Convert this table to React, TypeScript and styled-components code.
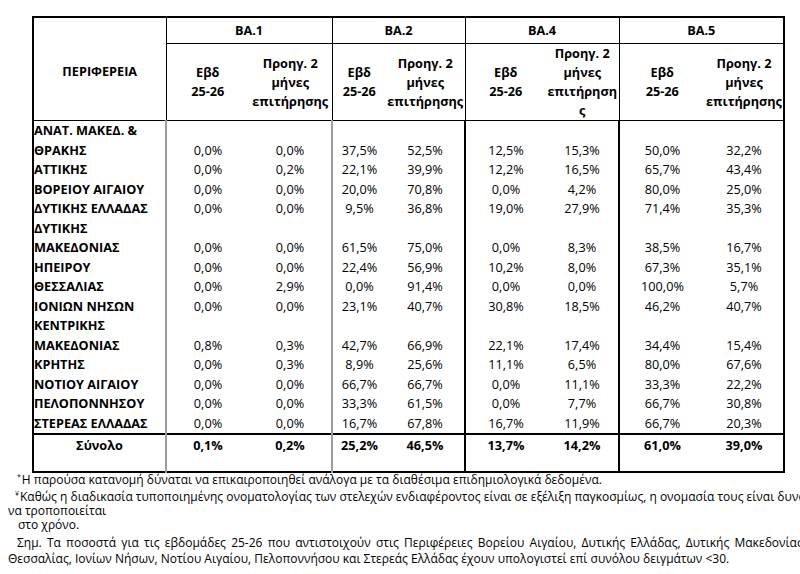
import React from "react";
import styled, { createGlobalStyle } from "styled-components";

const GlobalStyle = createGlobalStyle`
  html, body { margin: 0; padding: 0; background: #fff; }
  body { font-family: "Open Sans", "Noto Sans", sans-serif; color: #000; overflow: hidden; }
`;

const Page = styled.div`
  width: 800px;
  height: 574px;
  overflow: hidden;
  padding-top: 16px;
  box-sizing: border-box;
`;

const Table = styled.table`
  margin-left: 32px;
  width: 751px;
  border-collapse: collapse;
  table-layout: fixed;
  border: 2px solid #000;
  font-size: 12.7px;
  line-height: 19.5px;
`;

const GroupTh = styled.th`
  height: 25px;
  padding: 0;
  font-weight: 700;
  text-align: center;
  vertical-align: middle;
  border-bottom: 1px solid #000;
  border-right: 1px solid #000;
`;

const RegionTh = styled.th`
  padding: 5px 0 0;
  font-weight: 700;
  text-align: center;
  vertical-align: middle;
  border-right: 1px solid #000;
  border-bottom: 1px solid #000;
`;

const SubTh = styled.th<{ $edge: boolean }>`
  height: 74px;
  padding: 0;
  font-weight: 700;
  line-height: 19px;
  text-align: center;
  vertical-align: middle;
  white-space: nowrap;
  border-bottom: 1px solid #000;
  border-right: ${(p) => (p.$edge ? "1px solid #000" : "none")};
`;

type Line = "none" | "gray" | "black";

const lineCss = (l: Line) =>
  l === "gray" ? "2px solid #9c9c9c" : l === "black" ? "2px solid #000" : "none";

const RegionTd = styled.td<{ $total?: boolean }>`
  padding: ${(p) => (p.$total ? "1px 0 0" : "0")};
  font-weight: 700;
  text-align: ${(p) => (p.$total ? "center" : "left")};
  vertical-align: ${(p) => (p.$total ? "top" : "bottom")};
  white-space: nowrap;
  border-right: ${lineCss("gray")};
  ${(p) => (p.$total ? "height: 35px; border-top: 2px solid #000;" : "")}
`;

const ValueTd = styled.td<{ $line: Line; $total?: boolean }>`
  padding: ${(p) => (p.$total ? "1px 0 0" : "0")};
  text-align: center;
  vertical-align: ${(p) => (p.$total ? "top" : "bottom")};
  font-weight: ${(p) => (p.$total ? 700 : 400)};
  white-space: nowrap;
  border-right: ${(p) => lineCss(p.$line)};
  ${(p) => (p.$total ? "border-top: 2px solid #000;" : "")}
`;

const Notes = styled.div`
  padding-left: 8px;
  margin-top: 0;
  font-size: 12px;
  line-height: 14px;
  white-space: nowrap;
`;

const NoteLine = styled.div<{ $indent?: number; $gap?: number; $spread?: number }>`
  padding-left: ${(p) => p.$indent ?? 0}px;
  margin-top: ${(p) => p.$gap ?? 0}px;
  word-spacing: ${(p) => p.$spread ?? 0}px;
`;

const Mark = styled.sup`
  font-size: 7px;
  line-height: 0;
  vertical-align: 5px;
  margin-right: 1px;
`;

const colWidths = [133, 83, 83, 54, 79, 81, 73, 86, 79];
const valueLines: Line[] = ["none", "gray", "none", "black", "none", "black", "none", "none"];

const groups = ["ΒΑ.1", "ΒΑ.2", "ΒΑ.4", "ΒΑ.5"];

const rows: string[][] = [
  ["ΑΝΑΤ. ΜΑΚΕΔ. &|ΘΡΑΚΗΣ", "0,0%", "0,0%", "37,5%", "52,5%", "12,5%", "15,3%", "50,0%", "32,2%"],
  ["ΑΤΤΙΚΗΣ", "0,0%", "0,2%", "22,1%", "39,9%", "12,2%", "16,5%", "65,7%", "43,4%"],
  ["ΒΟΡΕΙΟΥ ΑΙΓΑΙΟΥ", "0,0%", "0,0%", "20,0%", "70,8%", "0,0%", "4,2%", "80,0%", "25,0%"],
  ["ΔΥΤΙΚΗΣ ΕΛΛΑΔΑΣ", "0,0%", "0,0%", "9,5%", "36,8%", "19,0%", "27,9%", "71,4%", "35,3%"],
  ["ΔΥΤΙΚΗΣ|ΜΑΚΕΔΟΝΙΑΣ", "0,0%", "0,0%", "61,5%", "75,0%", "0,0%", "8,3%", "38,5%", "16,7%"],
  ["ΗΠΕΙΡΟΥ", "0,0%", "0,0%", "22,4%", "56,9%", "10,2%", "8,0%", "67,3%", "35,1%"],
  ["ΘΕΣΣΑΛΙΑΣ", "0,0%", "2,9%", "0,0%", "91,4%", "0,0%", "0,0%", "100,0%", "5,7%"],
  ["ΙΟΝΙΩΝ ΝΗΣΩΝ", "0,0%", "0,0%", "23,1%", "40,7%", "30,8%", "18,5%", "46,2%", "40,7%"],
  ["ΚΕΝΤΡΙΚΗΣ|ΜΑΚΕΔΟΝΙΑΣ", "0,8%", "0,3%", "42,7%", "66,9%", "22,1%", "17,4%", "34,4%", "15,4%"],
  ["ΚΡΗΤΗΣ", "0,0%", "0,3%", "8,9%", "25,6%", "11,1%", "6,5%", "80,0%", "67,6%"],
  ["ΝΟΤΙΟΥ ΑΙΓΑΙΟΥ", "0,0%", "0,0%", "66,7%", "66,7%", "0,0%", "11,1%", "33,3%", "22,2%"],
  ["ΠΕΛΟΠΟΝΝΗΣΟΥ", "0,0%", "0,0%", "33,3%", "61,5%", "0,0%", "7,7%", "66,7%", "30,8%"],
  ["ΣΤΕΡΕΑΣ ΕΛΛΑΔΑΣ", "0,0%", "0,0%", "16,7%", "67,8%", "16,7%", "11,9%", "66,7%", "20,3%"],
];

const total = ["Σύνολο", "0,1%", "0,2%", "25,2%", "46,5%", "13,7%", "14,2%", "61,0%", "39,0%"];

const withBreaks = (text: string) =>
  text.split("|").map((part, i, arr) => (
    <React.Fragment key={i}>
      {part}
      {i < arr.length - 1 && <br />}
    </React.Fragment>
  ));

const subHeads = (g: number) => [
  "Εβδ|25-26",
  g === 2 ? "Προηγ. 2|μήνες|επιτήρηση|ς" : "Προηγ. 2|μήνες|επιτήρησης",
];

export default function App() {
  return (
    <>
      <GlobalStyle />
      <Page>
        <Table>
          <colgroup>
            {colWidths.map((w, i) => (
              <col key={i} style={{ width: w }} />
            ))}
          </colgroup>
          <thead>
            <tr>
              <RegionTh rowSpan={2}>ΠΕΡΙΦΕΡΕΙΑ</RegionTh>
              {groups.map((g) => (
                <GroupTh key={g} colSpan={2}>
                  {g}
                </GroupTh>
              ))}
            </tr>
            <tr>
              {groups.map((_, g) =>
                subHeads(g).map((h, j) => (
                  <SubTh key={`${g}-${j}`} $edge={j === 1}>
                    {withBreaks(h)}
                  </SubTh>
                ))
              )}
            </tr>
          </thead>
          <tbody>
            {rows.map((r) => (
              <tr key={r[0]}>
                <RegionTd>{withBreaks(r[0])}</RegionTd>
                {r.slice(1).map((v, i) => (
                  <ValueTd key={i} $line={valueLines[i]}>
                    {v}
                  </ValueTd>
                ))}
              </tr>
            ))}
            <tr>
              <RegionTd $total>{total[0]}</RegionTd>
              {total.slice(1).map((v, i) => (
                <ValueTd key={i} $line={valueLines[i]} $total>
                  {v}
                </ValueTd>
              ))}
            </tr>
          </tbody>
        </Table>
        <Notes>
          <NoteLine $indent={9}>
            <Mark>*</Mark>Η παρούσα κατανομή δύναται να επικαιροποιηθεί ανάλογα με τα διαθέσιμα επιδημιολογικά δεδομένα.
          </NoteLine>
          <NoteLine $indent={7} $gap={3}>
            <Mark>¥</Mark>Καθώς η διαδικασία τυποποιημένης ονοματολογίας των στελεχών ενδιαφέροντος είναι σε εξέλιξη παγκοσμίως, η ονομασία τους είναι δυνατό
          </NoteLine>
          <NoteLine>να τροποποιείται</NoteLine>
          <NoteLine $indent={10}>στο χρόνο.</NoteLine>
          <NoteLine $indent={9} $gap={4} $spread={2.1}>
            Σημ. Τα ποσοστά για τις εβδομάδες 25-26 που αντιστοιχούν στις Περιφέρειες Βορείου Αιγαίου, Δυτικής Ελλάδας, Δυτικής Μακεδονίας,
          </NoteLine>
          <NoteLine $gap={2}>
            Θεσσαλίας, Ιονίων Νήσων, Νοτίου Αιγαίου, Πελοποννήσου και Στερεάς Ελλάδας έχουν υπολογιστεί επί συνόλου δειγμάτων &lt;30.
          </NoteLine>
        </Notes>
      </Page>
    </>
  );
}
